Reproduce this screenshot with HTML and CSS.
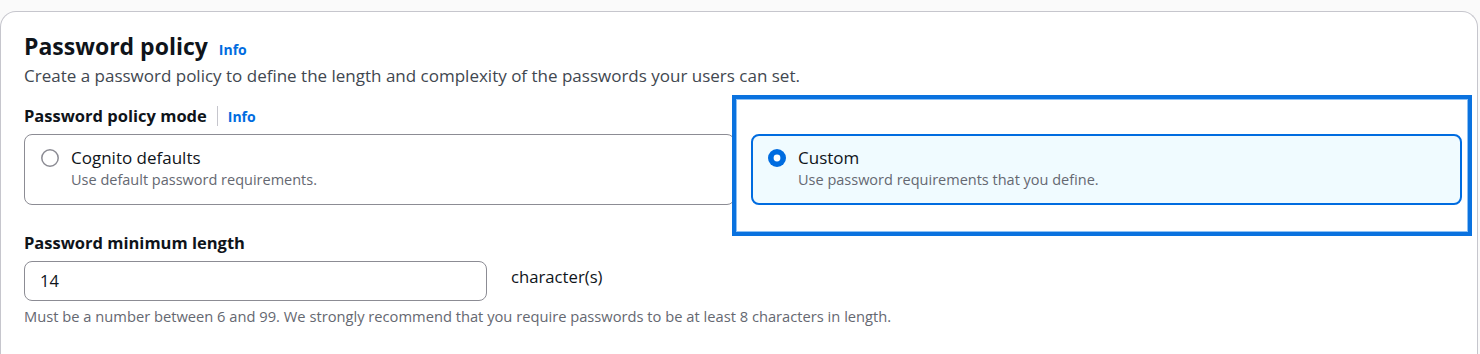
FILE: index.html
```html
<!DOCTYPE html>
<html lang="en">
<head>
<meta charset="utf-8">
<title>Password policy</title>
<link rel="stylesheet" href="styles.css">
</head>
<body>
<div class="page">
  <section class="card">
    <div class="header">
      <h2 class="title">Password policy <a class="info info-lg" href="#">Info</a></h2>
      <p class="desc">Create a password policy to define the length and complexity of the passwords your users can set.</p>
    </div>

    <div class="field">
      <div class="label-row">
        <span class="label">Password policy mode</span>
        <span class="sep"></span>
        <a class="info" href="#">Info</a>
      </div>
      <div class="tiles">
        <label class="tile">
          <svg class="radio" width="18" height="18" viewBox="0 0 18 18"><circle cx="9" cy="9" r="8.2" fill="#ffffff" stroke="#8c8c94" stroke-width="1.5"/></svg>
          <span class="tile-text">
            <span class="tile-label">Cognito defaults</span>
            <span class="tile-desc">Use default password requirements.</span>
          </span>
        </label>
        <label class="tile tile-selected">
          <svg class="radio" width="18" height="18" viewBox="0 0 18 18"><circle cx="9" cy="9" r="9" fill="#006ce0"/><circle cx="9" cy="9" r="3.4" fill="#ffffff"/></svg>
          <span class="tile-text">
            <span class="tile-label">Custom</span>
            <span class="tile-desc">Use password requirements that you define.</span>
          </span>
          <span class="highlight"></span>
        </label>
      </div>
    </div>

    <div class="field field-len">
      <div class="label">Password minimum length</div>
      <div class="input-row">
        <div class="input">14</div>
        <span class="unit">character(s)</span>
      </div>
      <div class="hint">Must be a number between 6 and 99. We strongly recommend that you require passwords to be at least 8 characters in length.</div>
    </div>
  </section>
</div>
</body>
</html>
```

FILE: styles.css
```css
html, body {
  margin: 0;
  padding: 0;
}
body {
  background: #fafafa;
  font-family: "Open Sans", "Noto Sans", Arial, sans-serif;
  color: #0f141a;
  overflow: hidden;
  height: 354px;
}
.page {
  padding-top: 11px;
  padding-right: 2px;
}
.card {
  background: #ffffff;
  border: 1px solid #c6c6cd;
  border-bottom: none;
  border-radius: 16px 16px 0 0;
  padding: 19px 15px 40px 23px;
  min-height: 340px;
}
.header {
  display: flex;
  flex-direction: column;
}
.title {
  margin: 0;
  font-size: 23px;
  line-height: 30px;
  font-weight: 700;
  color: #0f141a;
}
.info {
  color: #006ce0;
  font-size: 14px;
  font-weight: 700;
  text-decoration: none;
}
.info-lg {
  margin-left: 5px;
}
.desc {
  margin: 0;
  font-size: 17px;
  line-height: 22px;
  color: #414750;
}
.field {
  margin-top: 18px;
}
.label-row {
  display: flex;
  align-items: center;
  height: 22px;
}
.label {
  font-size: 16.5px;
  font-weight: 700;
  line-height: 22px;
  color: #0f141a;
}
.sep {
  width: 1px;
  height: 20px;
  background: #c6c6cd;
  margin: 0 10px;
}
.tiles {
  display: grid;
  grid-template-columns: 1fr 1fr;
  gap: 16px;
  margin-top: 7px;
}
.tile {
  position: relative;
  display: flex;
  align-items: flex-start;
  gap: 12px;
  padding: 12px 16px 13px;
  border: 1px solid #8c8c94;
  border-radius: 8px;
  background: #ffffff;
}
.tile-selected {
  border: 2px solid #006ce0;
  padding: 11px 15px 12px;
  background: #f0fbff;
}
.radio {
  flex: none;
  margin-top: 2px;
}
.tile-text {
  display: flex;
  flex-direction: column;
}
.tile-label {
  font-size: 17px;
  line-height: 22px;
  color: #0f141a;
}
.tile-desc {
  font-size: 14.5px;
  line-height: 22px;
  color: #656871;
}
.highlight {
  position: absolute;
  left: -21px;
  top: -41px;
  right: -12px;
  bottom: -33px;
  border: 4px solid #0a72df;
  box-shadow: inset 0 0 0 1px #8cc0f5;
  pointer-events: none;
}
.field-len {
  margin-top: 27px;
}
.input-row {
  display: flex;
  align-items: flex-start;
  gap: 24px;
  margin-top: 7px;
}
.input {
  box-sizing: border-box;
  width: 463px;
  height: 40px;
  border: 1px solid #8c8c94;
  border-radius: 8px;
  padding: 0 15px;
  font-size: 16.5px;
  line-height: 38px;
  color: #0f141a;
  background: #ffffff;
}
.unit {
  font-size: 16.7px;
  line-height: 32px;
  color: #0f141a;
}
.hint {
  margin-top: 5px;
  font-size: 14.7px;
  line-height: 20px;
  color: #656871;
}
```
